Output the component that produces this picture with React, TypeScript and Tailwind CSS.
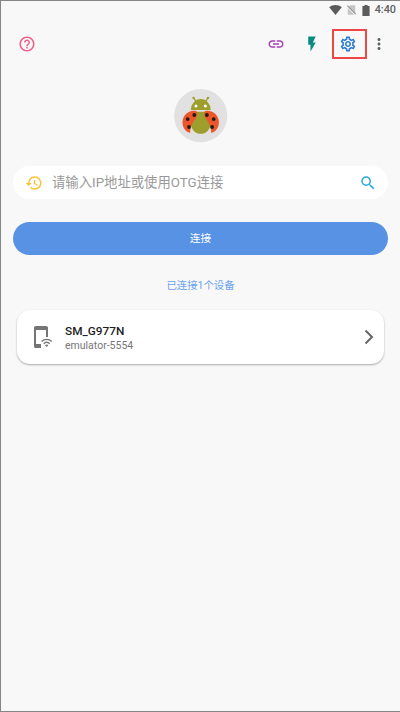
import React from "react";
import {
  MdHelpOutline,
  MdLink,
  MdFlashOn,
  MdOutlineSettings,
  MdMoreVert,
  MdHistory,
  MdSearch,
} from "react-icons/md";

function StatusBar() {
  return (
    <div className="flex h-[18px] items-center justify-end pr-[4px] text-[#5c5c5c]">
      <svg className="mr-[5px] h-[10px] w-[13px]" viewBox="0 0 13 10" fill="currentColor">
        <path d="M6.5 10 0.2 2.2C3.6-.6 9.4-.6 12.8 2.2z" />
      </svg>
      <svg className="mr-[6px] h-[10px] w-[9px]" viewBox="0 0 9 10">
        <path d="M3 .3h5.2v9.4H.8V2.6z" fill="#c4c4c4" />
        <path d="M.3 1.6 8.2 9.9" stroke="#f8f8f8" strokeWidth="1.4" />
        <path d="M.3.6 8.6 9.2" stroke="#8e8e8e" strokeWidth="1.1" />
      </svg>
      <svg className="mr-[5px] h-[11px] w-[8px]" viewBox="0 0 8 11" fill="currentColor">
        <path d="M2.4 0h3.200v1h2v10H.4V1h2z" />
      </svg>
      <span className="text-[10.8px] font-medium leading-none text-[#5c5c5c]">4:40</span>
    </div>
  );
}

function Toolbar() {
  return (
    <header className="mt-[9px] flex h-[31px] items-center pl-[17px]">
      <MdHelpOutline className="mt-px size-[18px] text-[#ee5f8a]" />
      <MdLink className="ml-[231px] mt-px size-[18px] text-[#a044b4]" />
      <MdFlashOn className="ml-[18px] size-[18px] text-[#078b80]" />
      <div className="ml-[11px] flex h-[30px] w-[35px] items-center justify-center border-2 border-[#ee4545] pr-[4px] pt-px">
        <MdOutlineSettings className="size-[18px] text-[#2a78d0]" />
      </div>
      <MdMoreVert className="ml-[3px] mt-px size-[18px] text-[#616161]" />
    </header>
  );
}

function BugLogo() {
  return (
    <svg className="size-[54px]" viewBox="0 0 54 54">
      <circle cx="26.7" cy="26.7" r="26.6" fill="#e1e1e1" />
      <g fill="#9d9e2b">
        <path d="M16.900 20.900a9.900 10.800 0 0 1 19.800 0z" />
        <path d="M21 22.800h11.600c3 3.200 4.400 8.300 4 12.700-.8 6-5 9.300-9.800 9.300s-9.200-3.300-9.900-9.300c-.5-4 1.100-9.500 4.100-12.700z" />
        <path d="m21.900 12.300-2.200-3.500M31.700 12.300l2.200-3.500" stroke="#9d9e2b" strokeWidth="1.300" />
        <circle cx="19.600" cy="8.900" r="1.200" />
        <circle cx="34" cy="8.900" r="1.200" />
      </g>
      <g fill="#fff">
        <circle cx="22" cy="16.900" r="1.500" />
        <circle cx="31.400" cy="16.900" r="1.500" />
      </g>
      <g fill="#eb562a">
        <path d="M22.600 22.200c-7.600-2-13.700 4-14.100 10.600-.3 5 2.600 9.900 7.700 11.300C16 38 18.600 33.500 21.300 30c1.800-2.600 2.500-5 1.300-7.800z" />
        <path d="M30.800 22.200c7.600-2 13.700 4 14.100 10.600.3 5-2.600 9.900-7.700 11.300.2-6.100-2.400-10.600-5.100-14.100-1.800-2.600-2.500-5-1.300-7.800z" />
      </g>
      <g fill="#211b18">
        <circle cx="20.300" cy="26" r="1.900" />
        <circle cx="13.700" cy="30.100" r="1.900" />
        <circle cx="15" cy="38" r="1.900" />
        <circle cx="32.900" cy="26" r="1.900" />
        <circle cx="39.700" cy="30.100" r="1.900" />
        <circle cx="38.100" cy="38" r="1.900" />
      </g>
    </svg>
  );
}

function DeviceCard() {
  return (
    <section className="mx-4 mt-[16px] flex h-[54px] w-[367px] items-center rounded-[13px] bg-white shadow-[0_1px_2px_rgba(0,0,0,0.32)]">
      <svg className="ml-[16px] h-[24px] w-[20px] text-[#757575]" viewBox="0 0 20 24" fill="currentColor">
        <path d="M2.800 1h10.400c1 0 1.800.8 1.800 1.800V12h-2V5H3v14h5v4H2.800C1.800 23 1 22.200 1 21.200V2.800C1 1.800 1.800 1 2.800 1z" />
        <g fill="none" stroke="currentColor" strokeWidth="1.300">
          <path d="M8.700 16.500c2.800-2.900 7.200-2.900 10 0" />
          <path d="M10.700 18.700c1.700-1.600 4.300-1.600 6 0" />
        </g>
        <path d="M12 20.200q1.700-1.200 3.400 0l-1.700 1.900z" />
      </svg>
      <div className="ml-[12px] flex flex-col pt-[2px]">
        <span className="text-[11.800px] font-medium leading-[15px] text-[#1d1d1d]">SM_G977N</span>
        <span className="text-[10.500px] leading-[14px] text-[#777]">emulator-5554</span>
      </div>
      <svg className="ml-auto mr-[10px] h-[16px] w-[10px]" viewBox="0 0 10 16" fill="none">
        <path d="m1.500 1.500 6.500 6.500-6.500 6.500" stroke="#666" strokeWidth="2" />
      </svg>
    </section>
  );
}

export default function App() {
  return (
    <div className="h-[712px] w-[400px] overflow-hidden border-y border-l border-[#858585] bg-[#f8f8f8] font-['Roboto','Noto_Sans_CJK_SC',sans-serif]">
      <StatusBar />
      <Toolbar />
      <main className="flex flex-col">
        <div className="mt-[30px] flex justify-center pl-px">
          <BugLogo />
        </div>
        <div className="ml-[12px] mt-[23px] flex h-[33px] w-[375px] items-center rounded-full bg-white">
          <MdHistory className="ml-[12px] size-[18px] text-[#fbc02d]" />
          <span className="ml-[9px] mt-px text-[13.350px] leading-none text-[#999]">请输入IP地址或使用OTG连接</span>
          <MdSearch className="ml-auto mr-[11px] size-[18px] text-[#29a9df]" />
        </div>
        <button className="ml-[12px] mt-[23px] flex h-[33px] w-[375px] items-center justify-center rounded-full bg-[#5892e4] pt-px text-[10.700px] leading-none text-white">
          连接
        </button>
        <p className="mt-[23px] h-[16px] text-center text-[10.400px] leading-[16px] text-[#69a2ed]">已连接1个设备</p>
        <DeviceCard />
      </main>
    </div>
  );
}
